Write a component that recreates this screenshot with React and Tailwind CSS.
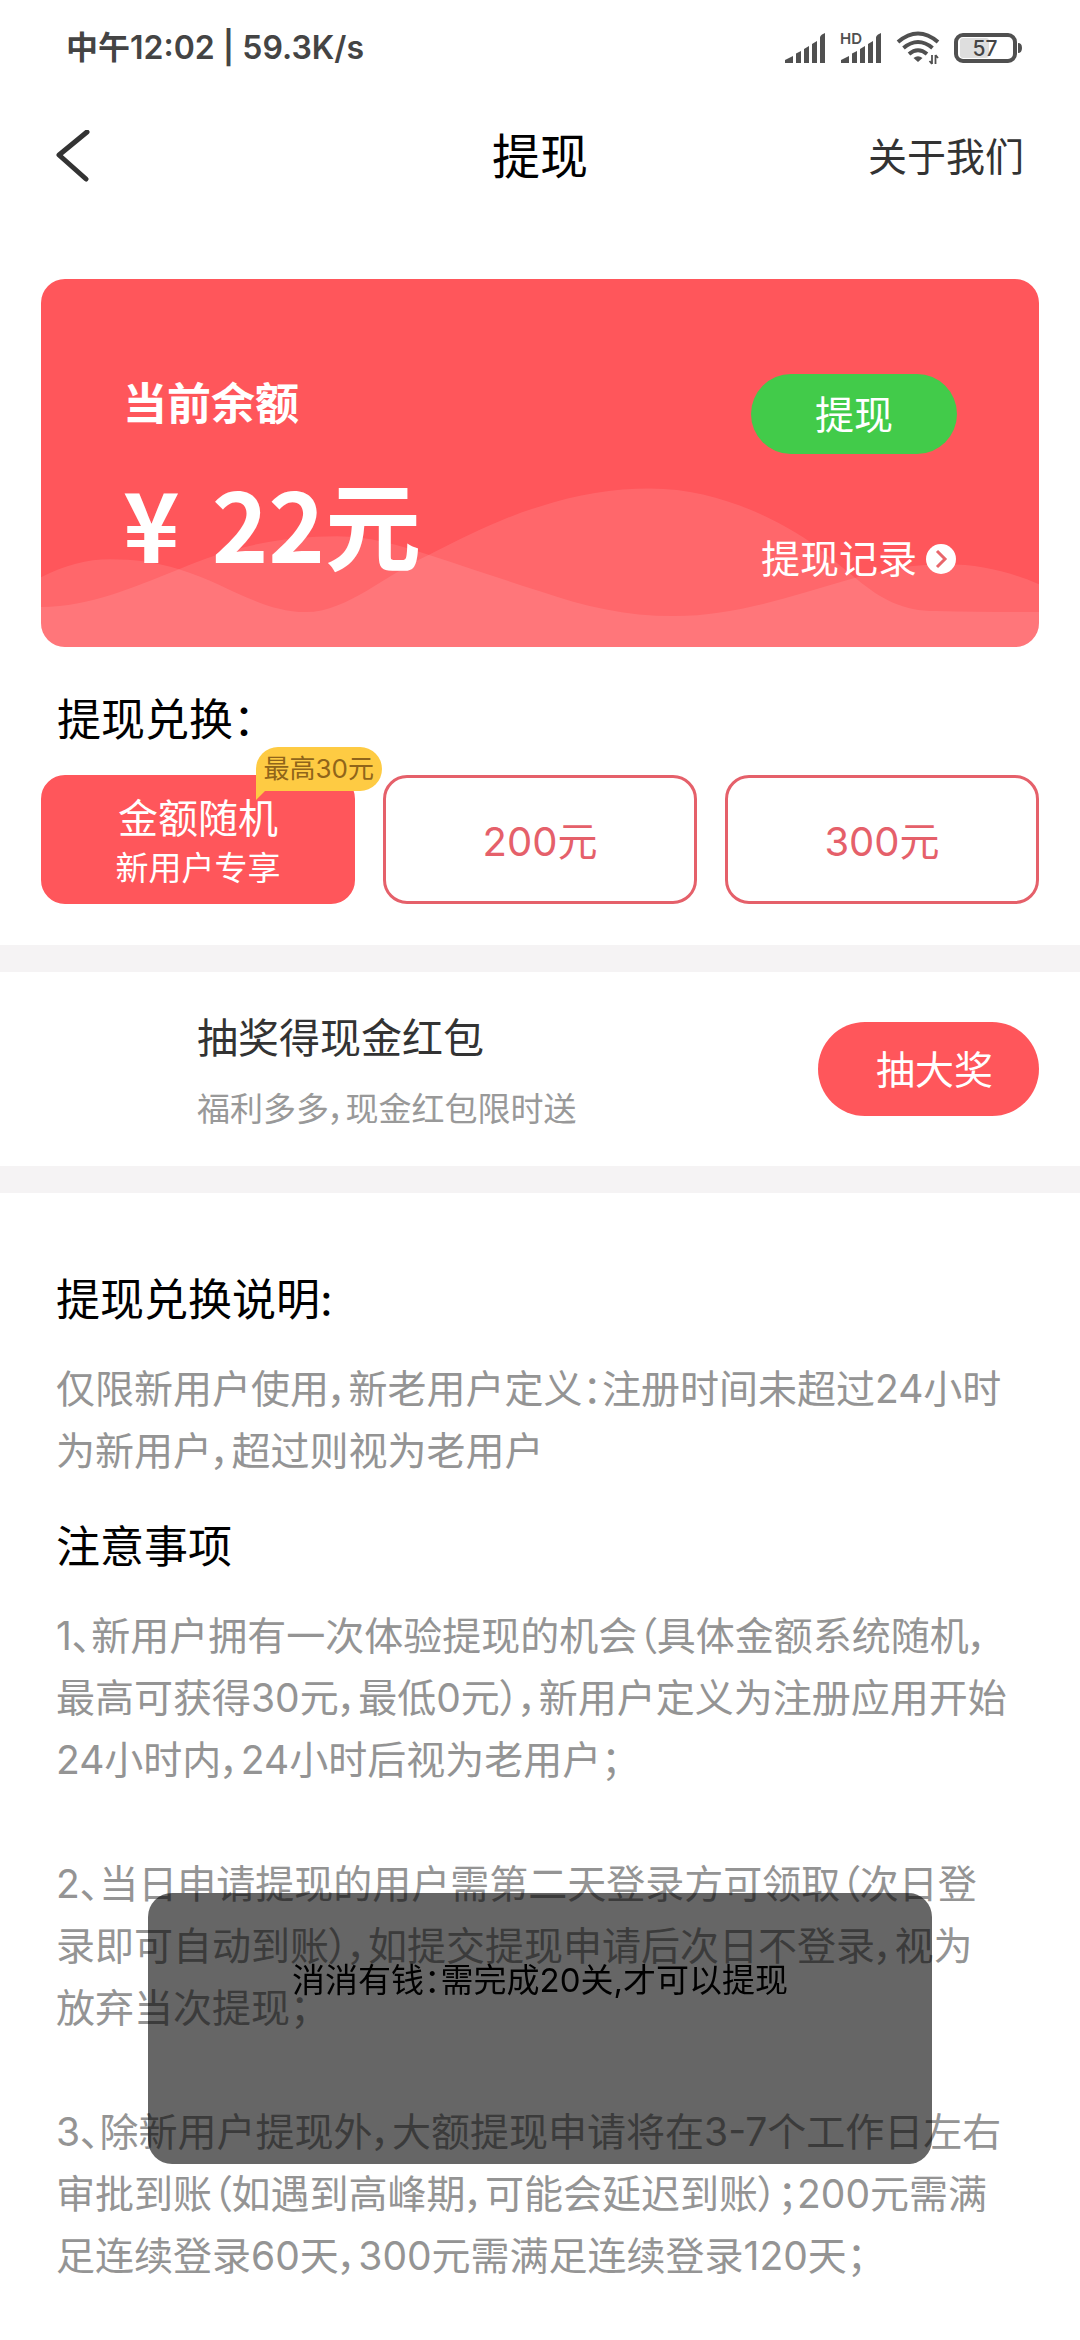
import React, { useState } from "react";

const amounts = [
  { id: 0, label: "金额随机", note: "新用户专享", badge: "最高30元" },
  { id: 1, label: "200元" },
  { id: 2, label: "300元" },
];

const notices = [
  ["1、新用户拥有一次体验提现的机会（具体金额系统随机，", "最高可获得30元，最低0元），新用户定义为注册应用开始", "24小时内，24小时后视为老用户；"],
  ["2、当日申请提现的用户需第二天登录方可领取（次日登", "录即可自动到账），如提交提现申请后次日不登录，视为", "放弃当次提现；"],
  ["3、除新用户提现外，大额提现申请将在3-7个工作日左右", "审批到账（如遇到高峰期，可能会延迟到账）；200元需满", "足连续登录60天，300元需满足连续登录120天；"],
];

const Lines = ({ lines }) => (
  <p className="text-[39px] leading-[62px] text-[#949494] whitespace-nowrap">
    {lines.map((line, index) => (
      <span key={index} className="block">
        {line}
      </span>
    ))}
  </p>
);

const StatusBar = () => (
  <div className="flex items-center justify-between pt-[25px] pl-[66px] pr-14 text-[#444]">
    <span className="text-[32px] leading-[46px] font-semibold">中午12:02 | 59.3K/s</span>
    <div className="flex items-center gap-[14px]">
      <svg width="41" height="30" viewBox="0 0 41 30" fill="#505050">
        <path d="M0 30V27L8 23V30ZM11 30V20.500L16 18V30ZM19 30V16L24 13V30ZM27 30V11L32 8V30ZM35 30V4.500Q35 3 37 1.500L40 0V30Z" />
      </svg>
      <svg className="overflow-visible" width="42" height="34" viewBox="0 0 42 34" fill="#505050">
        <text x="0" y="13" fontSize="15" fontWeight="600">HD</text>
        <path d="M1 32V29L9 25V32ZM12 32V22.500L17 20V32ZM20 32V18L25 15V32ZM28 32V13L33 10V32ZM36 32V6.500Q36 5 38 3.500L41 2V32Z" />
      </svg>
      <svg width="44" height="34" viewBox="0 0 44 34" fill="none" stroke="#505050" strokeWidth="4">
        <path d="M2 11Q22 -6 42 11" />
        <path d="M7.500 17Q22 5 36.500 17" />
        <path d="M13 23Q22 15.500 31 23" />
        <path d="M17.500 27Q22 23.500 26.500 27L22 31Z" fill="#505050" stroke="none" />
        <path d="M36 24V33M33.500 30L36 33M39.500 33V24M42 27L39.500 24" strokeWidth="1.800" />
      </svg>
      <svg width="70" height="30" viewBox="0 0 70 30">
        <rect x="6" y="5" width="29" height="20" rx="3" fill="#dedede" />
        <rect x="2" y="2" width="59" height="26" rx="7" fill="none" stroke="#505050" strokeWidth="4" />
        <path d="M64 10Q68 10 68 15T64 20Z" fill="#505050" />
        <text x="31" y="23" fontSize="21" fontWeight="500" textAnchor="middle" fill="#444">57</text>
      </svg>
    </div>
  </div>
);

const Waves = () => (
  <svg
    className="absolute inset-0 w-full h-full"
    viewBox="0 0 998 369"
    preserveAspectRatio="none"
    fill="#fff"
    fillOpacity="0.1"
  >
    <path d="M0 299C24 287 46 281 69 281C94 281 115 284 138 291C185 305 220 334 265 334C306 334 345 296 389 276C425 258 462 239 499 228C536 216 572 210 609 210C665 210 716 231 754 254C779 269 794 284 816 301C840 321 862 333 895 333C930 334 965 334 998 334V369H0Z" />
    <path d="M0 329C50 328 90 310 138 291C190 268 242 258 296 258C328 258 358 267 389 277C426 289 461 301 499 313C542 328 585 338 633 338C695 338 750 318 809 301C844 291 872 286 905 286C940 286 970 294 998 306V369H0Z" />
  </svg>
);

const App = () => {
  const [selected, setSelected] = useState(0);

  return (
    <div className="relative min-h-screen overflow-hidden bg-white text-black font-['Inter','Noto_Sans_CJK_SC',sans-serif] [font-feature-settings:'palt']">
      <StatusBar />

      <header className="grid grid-cols-3 items-center px-14 pt-[54px]">
        <button aria-label="返回" className="justify-self-start">
          <svg width="34" height="54" viewBox="0 0 34 54" fill="none" stroke="#333" strokeWidth="5" strokeLinecap="round" strokeLinejoin="round">
            <path d="M31 2L3 25L30 49" />
          </svg>
        </button>
        <h1 className="text-center text-[48px] leading-[64px]">提现</h1>
        <a href="#about" className="justify-self-end text-[39px] leading-[62px] text-[#333]">关于我们</a>
      </header>

      <section className="relative mx-[41px] mt-[90px] overflow-hidden rounded-3xl bg-[#ff565b] text-white">
        <Waves />
        <div className="relative flex justify-between px-[82px] pt-[95px] pb-[57px]">
          <div className="flex flex-col gap-7 pb-2">
            <h2 className="text-[44px] leading-[60px] font-bold">当前余额</h2>
            <p className="flex gap-8 text-[96px] leading-[120px] font-bold font-['Noto_Sans_CJK_SC',sans-serif]">
              <span>¥</span>
              <span>22元</span>
            </p>
          </div>
          <div className="flex flex-col items-end justify-between">
            <button className="rounded-full bg-[#42cb4a] px-16 pt-[10px] pb-2 text-[39px] leading-[62px]">提现</button>
            <a href="#records" className="flex items-center gap-2 text-[39px] leading-[62px]">
              提现记录
              <svg width="32" height="32" viewBox="0 0 32 32">
                <circle cx="16" cy="16" r="15" fill="#fff" />
                <path d="M12 8L20 16L12 24" fill="none" stroke="#e8666b" strokeWidth="3" />
              </svg>
            </a>
          </div>
        </div>
      </section>

      <section className="px-[41px] pt-[43px] pb-[41px]">
        <h2 className="pl-4 text-[44px] leading-[60px]">提现兑换：</h2>
        <div className="mt-[25px] grid grid-cols-3 gap-7">
          {amounts.map((item) => (
            <button
              key={item.id}
              onClick={() => setSelected(item.id)}
              className={`relative flex h-[129px] flex-col items-center justify-center rounded-3xl border-3 pt-1 ${
                selected === item.id
                  ? "border-[#ff565b] bg-[#ff565b] text-white"
                  : "border-[#e5606a] bg-white text-[#e5606a]"
              }`}
            >
              <span className="text-[40px] leading-[52px]">{item.label}</span>
              {item.note && <span className="text-[33px] leading-[46px]">{item.note}</span>}
              {item.badge && (
                <span className="absolute -top-[31px] -right-[30px] rounded-[22px] rounded-bl-none bg-[#fecb43] px-2 text-[26px] leading-[44px] text-[#90651a]">
                  {item.badge}
                  <svg className="absolute left-0 top-full" width="9" height="9" viewBox="0 0 9 9">
                    <path d="M0 0H9L0 9Z" fill="#fecb43" />
                  </svg>
                </span>
              )}
            </button>
          ))}
        </div>
      </section>

      <section className="flex items-center justify-between border-y-[27px] border-[#f5f3f4] py-8 pl-[197px] pr-[41px]">
        <div className="flex flex-col gap-4 pt-1">
          <h2 className="text-[41px] leading-[60px] text-[#333]">抽奖得现金红包</h2>
          <p className="text-[33px] leading-[50px] text-[#999]">福利多多，现金红包限时送</p>
        </div>
        <button className="rounded-full bg-[#ff565b] pl-[58px] pr-[46px] pt-[17px] pb-[15px] text-[39px] leading-[62px] text-white">抽大奖</button>
      </section>

      <section className="px-14 pt-[77px]">
        <h2 className="mb-7 text-[44px] leading-[60px]">提现兑换说明:</h2>
        <Lines lines={["仅限新用户使用，新老用户定义：注册时间未超过24小时", "为新用户，超过则视为老用户"]} />
        <h2 className="mt-[35px] mb-7 text-[44px] leading-[60px]">注意事项</h2>
        <div className="flex flex-col gap-[62px]">
          {notices.map((lines, index) => (
            <Lines key={index} lines={lines} />
          ))}
        </div>
      </section>

      <div role="status" className="fixed inset-x-[148px] bottom-44 rounded-3xl bg-black/60 pt-16 pb-[161px] text-center text-[33px] leading-[46px]">
        消消有钱：需完成20关,才可以提现
      </div>
    </div>
  );
};

export default App;
